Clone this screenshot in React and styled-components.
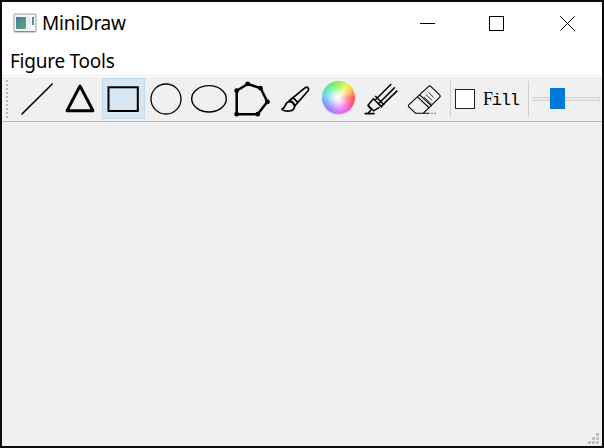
import React from "react";
import styled, { createGlobalStyle } from "styled-components";

const GlobalStyle = createGlobalStyle`
  * { box-sizing: border-box; }
  body { margin: 0; background: #f0f0f0; }
`;

const Window = styled.div`
  width: 604px;
  height: 448px;
  display: flex;
  flex-direction: column;
  border: 2px solid #0c0a0c;
  background: #f0f0f0;
  color: #000;
  font-family: "Noto Sans", sans-serif;
  overflow: hidden;
`;

const TitleBar = styled.header`
  height: 44px;
  flex: none;
  display: flex;
  align-items: center;
  padding: 0 27px 2px 11px;
  background: #fff;
`;

const Title = styled.h1`
  flex: 1;
  margin: 0 0 0 5px;
  font-size: 19px;
  font-weight: 400;
  line-height: 26px;
  letter-spacing: -0.25px;
`;

const Controls = styled.div`
  display: flex;
  align-items: center;
`;

const ControlIcon = styled.svg`
  display: block;
  fill: none;
  stroke: #000;
  margin-left: ${(p) => p.$gap || 0}px;
`;

const MenuBar = styled.nav`
  height: 31px;
  flex: none;
  display: flex;
  align-items: center;
  padding: 0 8px 1px;
  background: #fff;
  border-bottom: 1px solid #fff;
  box-shadow: inset 0 -1px #ececec;
`;

const MenuItem = styled.span`
  font-size: 19px;
  line-height: 26px;
  letter-spacing: -0.25px;
  white-space: nowrap;
`;

const ToolBar = styled.div`
  height: 45px;
  flex: none;
  display: flex;
  align-items: flex-start;
  padding: 1px 2px 0 4px;
  border-bottom: 1px solid #b8b8b8;
`;

const Grip = styled.div`
  width: 2px;
  height: 38px;
  flex: none;
  margin: 2px 8px 0 0;
  background: repeating-linear-gradient(#b8b8b8 0 2px, transparent 2px 4px);
`;

const ToolButton = styled.button`
  width: 43px;
  height: 41px;
  flex: none;
  padding: 0;
  display: flex;
  border: 0;
  background: ${(p) => (p.$active ? "#d8e6f2" : "transparent")};
  box-shadow: ${(p) => (p.$active ? "inset 0 0 0 1px #c0dcf3" : "none")};
`;

const Icon = styled.svg`
  display: block;
  flex: none;
  fill: none;
  stroke: #000;
`;

const ColorWheel = styled.span`
  width: 33px;
  height: 33px;
  margin: 3px 0 0 5px;
  border-radius: 50%;
  background:
    radial-gradient(circle at 48% 52%, #fff 0%, rgba(255, 255, 255, 0.85) 15%, rgba(255, 255, 255, 0.4) 42%, rgba(255, 255, 255, 0.05) 68%),
    conic-gradient(#83f23e, #e8f83c 35deg, #ffad35 65deg, #ff403e 92deg, #ff3988 120deg, #f93fe5 150deg, #c25cff 180deg, #7a62ff 220deg, #5794ff 255deg, #47c9f8 278deg, #43e4a2 310deg, #5ce95a 335deg, #83f23e);
  box-shadow: 0 1px 2px #d0d0d0;
`;

const Separator = styled.div`
  width: 1px;
  height: 36px;
  flex: none;
  margin: 3px 4px 0;
  background: #cfcfcf;
`;

const CheckLabel = styled.label`
  width: 69px;
  height: 42px;
  flex: none;
  display: flex;
  align-items: center;
  gap: 8px;
`;

const CheckBox = styled.span`
  width: 20px;
  height: 20px;
  flex: none;
  border: 1px solid #222;
  background: #fff;
`;

const CheckText = styled.span`
  display: block;
  padding-top: 2px;
  font: 17px/20px "Liberation Mono", monospace;
  letter-spacing: -1.2px;
  &::first-letter {
    font-family: "Liberation Serif", serif;
    font-size: 18px;
  }
`;

const Slider = styled.div`
  width: 67px;
  height: 21px;
  margin-top: 10px;
  display: flex;
  align-items: center;
`;

const Groove = styled.div`
  width: ${(p) => p.$width}px;
  height: 4px;
  flex: none;
  border: 1px solid #d4d4d4;
  background: #e9e9e9;
`;

const Handle = styled.div`
  width: 15px;
  height: 21px;
  flex: none;
  background: #007ad9;
`;

const Canvas = styled.main`
  flex: 1;
  display: flex;
  align-items: flex-end;
  justify-content: flex-end;
  padding: 0 3px 2px;
`;

const ToolIcon = ({ children, ...rest }) => (
  <Icon width="43" height="41" viewBox="0 0 43 41" {...rest}>
    {children}
  </Icon>
);

const AppIcon = () => (
  <Icon width="24" height="20" viewBox="0 0 24 20">
    <defs>
      <linearGradient id="screen" x1="0" y1="0" x2="1" y2="1">
        <stop offset="0" stopColor="#4b79a6" />
        <stop offset="1" stopColor="#58ad70" />
      </linearGradient>
    </defs>
    <rect x="1" y="1" width="22" height="18" rx="1" fill="#f4f6f7" stroke="#9b9ea3" />
    <path d="M2 18.5h20" stroke="#858991" />
    <rect x="3" y="4" width="10" height="12" fill="url(#screen)" stroke="none" />
    <rect x="14" y="4" width="4" height="12" fill="#e7eaf0" stroke="none" />
    <rect x="19" y="4" width="2" height="8" fill="url(#screen)" stroke="none" />
    <path d="M15 11.5h2m-2 2h2m2 0h2" stroke="#fff" />
  </Icon>
);

const tools = [
  ["Line", <ToolIcon strokeWidth="1.6" strokeLinecap="round"><path d="M6 36 36.2 6" /></ToolIcon>],
  [
    "Triangle",
    <ToolIcon strokeWidth="2.9" strokeLinejoin="round">
      <path d="M21 8 34 32.7H8Z" />
    </ToolIcon>,
  ],
  ["Rectangle", <ToolIcon strokeWidth="2"><rect x="6.5" y="9.3" width="29.3" height="23.7" /></ToolIcon>],
  ["Circle", <ToolIcon strokeWidth="1.3"><circle cx="21" cy="21" r="15" /></ToolIcon>],
  ["Ellipse", <ToolIcon strokeWidth="1.4"><ellipse cx="21" cy="20.8" rx="17.3" ry="13.2" /></ToolIcon>],
  [
    "Polygon",
    <ToolIcon strokeWidth="2.5" strokeLinejoin="round">
      <path d="M5.7 12.7 16.7 6 29.7 10.2 36.3 23.8 26.7 36.2H5.7Z" />
      <g fill="#000" stroke="none">
        <circle cx="5.7" cy="12.7" r="2.4" />
        <circle cx="16.7" cy="5.9" r="2.4" />
        <circle cx="29.5" cy="10.2" r="2.4" />
        <circle cx="36.5" cy="23.8" r="2.4" />
        <circle cx="26.7" cy="36.2" r="2.4" />
        <circle cx="5.7" cy="36.2" r="2.4" />
      </g>
    </ToolIcon>,
  ],
  [
    "Brush",
    <ToolIcon strokeWidth="1.7" strokeLinejoin="round" strokeLinecap="round">
      <path d="M15.5 22.5 31.2 9.7c2.2-1.4 4.4 1 2.9 3L21 27.8M19.2 19.8l4.6 4.6" />
      <path d="M15.5 22.5q3.8 1.2 5.5 5.3" />
      <path d="M20.5 28.2c-.3-3.2-4-5.7-7-4-2.7 1.6-1.8 5.5-5.6 7.1 3.5 2.7 12.8 2.8 12.6-3.1Z" />
    </ToolIcon>,
  ],
  ["Colors", <ColorWheel />],
  [
    "Marker",
    <ToolIcon strokeWidth="1.5">
      <path d="M31.3 6 15 22.3M34.8 9.4 18 26.2M37.3 12.6 21 28.6" />
      <path d="m12.9 20.2 9.2 9.2M15.2 18l9 9" />
      <path d="M13 21.2 8 27.3l5.7 5.5 6-3.7M8 28l3.5 3.5-3.7 4" />
      <path d="M4.5 35.6h10.2" strokeWidth="1.7" />
    </ToolIcon>,
  ],
  [
    "Eraser",
    <ToolIcon strokeWidth="1.1" strokeLinejoin="round">
      <path d="M12.4 35.2 5.8 28.8q-1-1 0-2L25.6 8.3q1.2-1 2.2 0l9 8.8q1 1 0 2L20.4 35.2" />
      <path d="M14.5 18.8 26.3 30M16.7 16.8 28.7 28" />
      <path d="m20.8 18.8 7.8 7.2M22.7 16.4l6.6 6.2M25.4 14.3l5.2 5" strokeWidth="0.8" />
      <path d="M12 35.2h14.5M28.5 35.2h1m2 0h1" />
    </ToolIcon>,
  ],
];

export default function App() {
  return (
    <>
      <GlobalStyle />
      <Window>
        <TitleBar>
          <AppIcon />
          <Title>MiniDraw</Title>
          <Controls>
            <ControlIcon width="15" height="15" viewBox="0 0 15 15" shapeRendering="crispEdges"><path d="M0 7.5h15" /></ControlIcon>
            <ControlIcon $gap={54} width="15" height="15" viewBox="0 0 15 15" shapeRendering="crispEdges"><path d="M.5.5h14v14H.5z" /></ControlIcon>
            <ControlIcon $gap={56} width="15" height="15" viewBox="0 0 15 15"><path d="m.3.3 14.4 14.4m0-14.4L.3 14.7" /></ControlIcon>
          </Controls>
        </TitleBar>
        <MenuBar><MenuItem>Figure Tools</MenuItem></MenuBar>
        <ToolBar>
          <Grip />
          {tools.map(([name, icon]) => (
            <ToolButton key={name} aria-label={name} $active={name === "Rectangle"}>{icon}</ToolButton>
          ))}
          <Separator />
          <CheckLabel><CheckBox /><CheckText>Fill</CheckText></CheckLabel>
          <Separator />
          <Slider><Groove $width={17} /><Handle /><Groove $width={35} /></Slider>
        </ToolBar>
        <Canvas>
          <Icon width="11" height="11" viewBox="0 0 11 11" shapeRendering="crispEdges">
            <path d="M8 0h3v3H8zM4 4h3v3H4zM8 4h3v3H8zM0 8h3v3H0zM4 8h3v3H4zM8 8h3v3H8z" fill="#bfbfbf" stroke="none" />
          </Icon>
        </Canvas>
      </Window>
    </>
  );
}
